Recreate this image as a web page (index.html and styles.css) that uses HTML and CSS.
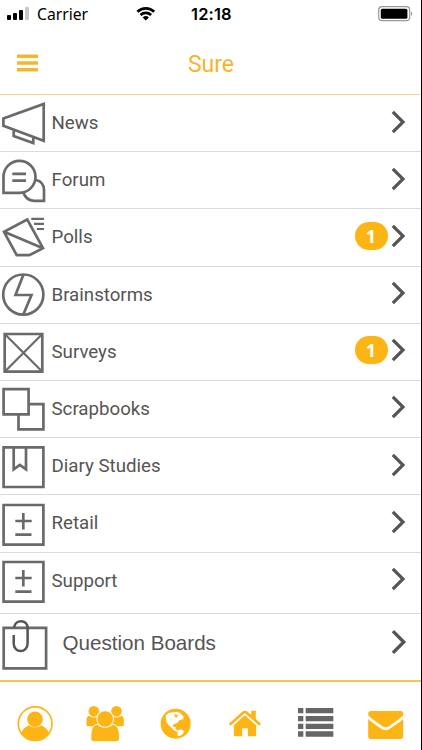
FILE: index.html
```html
<!DOCTYPE html>
<html lang="en">
<head>
<meta charset="utf-8">
<meta name="viewport" content="width=device-width, initial-scale=1">
<title>Sure</title>
<link rel="stylesheet" href="styles.css">
</head>
<body>
<svg class="defs" aria-hidden="true">
  <symbol id="chevron" viewBox="0 0 16 24"><path d="M1.8 1.8 12 12 1.8 22.2" fill="none" stroke="#555" stroke-width="3.2"/></symbol>
  <symbol id="plusminus" viewBox="0 0 50 56"><path d="M3.6 9h39.8v39.7H3.6zM23.3 17v16.5M15.3 25h16.4M15.3 38.7h16.2"/></symbol>
</svg>
<div class="app">
  <header class="status">
    <svg class="signal" viewBox="0 0 24 16"><rect x="0" y="9" width="4" height="5" rx="1"/><rect x="6" y="7" width="4" height="7" rx="1"/><rect x="12" y="4" width="4" height="10" rx="1"/><rect x="18" y="1" width="4" height="13" rx="1" fill="#c8c8c8"/></svg>
    <span class="carrier">Carrier</span>
    <svg class="wifi" viewBox="0 0 20 16"><path d="M1.400 5.800a12 12 0 0 1 16.800 0M4.500 9a7.700 7.700 0 0 1 10.600 0" fill="none" stroke="#000" stroke-width="2.700"/><path d="M9.800 14.600 6.700 11.400a4.500 4.500 0 0 1 6.200 0z"/></svg>
    <span class="time">12:18</span>
    <svg class="battery" viewBox="0 0 36 16"><rect x=".7" y=".7" width="31" height="14" rx="3.5" fill="#fff" stroke="#999" stroke-width="1.200"/><rect x="2.800" y="2.800" width="26.600" height="10" rx="1.500"/><path d="M33.200 5.500q2 2.200 0 4.500z" fill="#777"/></svg>
  </header>
  <nav class="titlebar">
    <svg class="burger" viewBox="0 0 21 18"><path d="M0 2.200h21M0 9h21M0 15.800h21" stroke="#f3b72d" stroke-width="3.600"/></svg>
    <h1>Sure</h1>
  </nav>
  <main class="list">
    <a class="row"><svg class="icon" viewBox="0 0 50 56"><path d="M43.700 9v36.700L3.400 30.800v-7.300zM13.700 35v6l19.600 7v-6"/></svg><span class="label">News</span><svg class="chev"><use href="#chevron"/></svg></a>
    <a class="row"><svg class="icon" viewBox="0 0 50 56"><path d="M3.500 40.800V25a16 16 0 1 1 16 15.800zM12.300 21.800H26M12.300 28.600H26M35.800 28q8 1.500 8.200 10v10.800H34q-8-.5-10.500-8"/></svg><span class="label">Forum</span><svg class="chev"><use href="#chevron"/></svg></a>
    <a class="row"><svg class="icon" viewBox="0 0 50 56"><path d="M27.300 10.500 4 22.800l12.700 23.400h12.600L43 39.200zM4 22.800l39 16.400"/><path class="thin" d="M31.300 9.800H44M34 14.800h10M36.800 20H44"/></svg><span class="label">Polls</span><span class="badge">1</span><svg class="chev"><use href="#chevron"/></svg></a>
    <a class="row"><svg class="icon" viewBox="0 0 50 56"><circle cx="23.300" cy="27.600" r="20.100"/><path d="M23.300 8 15.500 28h16l-8.200 19.500"/></svg><span class="label">Brainstorms</span><svg class="chev"><use href="#chevron"/></svg></a>
    <a class="row"><svg class="icon" viewBox="0 0 50 56"><path d="M4.700 10h37.600v37.700H4.700z"/><path class="thin" d="m4.700 10 37.600 37.700M42.300 10 4.700 47.700"/></svg><span class="label">Surveys</span><span class="badge">1</span><svg class="chev"><use href="#chevron"/></svg></a>
    <a class="row"><svg class="icon" viewBox="0 0 50 56"><path d="M3.600 8.200h25v25.100h-25zM28.600 23.100h14.800v25.200H18.500v-15"/></svg><span class="label">Scrapbooks</span><svg class="chev"><use href="#chevron"/></svg></a>
    <a class="row"><svg class="icon" viewBox="0 0 50 56"><path d="M3.600 9.300h39.800V49H3.600zM13.700 9.300v22l6.100-4.300 6.200 4.300v-22"/></svg><span class="label">Diary Studies</span><svg class="chev"><use href="#chevron"/></svg></a>
    <a class="row"><svg class="icon lower"><use href="#plusminus"/></svg><span class="label">Retail</span><svg class="chev"><use href="#chevron"/></svg></a>
    <a class="row tall"><svg class="icon"><use href="#plusminus"/></svg><span class="label">Support</span><svg class="chev"><use href="#chevron"/></svg></a>
    <a class="row last"><svg class="icon" viewBox="0 0 50 56"><path d="M3.700 13.800h42.400v40.500H3.700z"/><path class="clip" d="M13.700 21v8.500c0 10 13.900 10 13.900 0V14c0-9-12.500-9-13.500-.5"/></svg><span class="label">Question Boards</span><svg class="chev"><use href="#chevron"/></svg></a>
  </main>
  <footer class="tabs">
    <svg viewBox="0 24 210.500 201"><circle cx="105.500" cy="146" r="50.500" fill="none" stroke="#fdb515" stroke-width="5"/><circle cx="105" cy="133" r="23.500"/><path d="M63 174c5-11 14-19 24-23 10 9 26 9 36 0 11 4 19 12 24 23a50 50 0 0 1-84 0z"/></svg>
    <svg viewBox="210.500 24 210.500 201"><circle cx="282" cy="109" r="16"/><circle cx="350" cy="109" r="16"/><path d="M260 149v-14c0-8 3-12 8-13 9 7 19 7 28 0l8 6v26h-38c-4 0-6-2-6-5zM372 149v-14c0-8-3-12-8-13-9 7-19 7-28 0l-8 6v26h38c4 0 6-2 6-5z"/><path stroke="#fff" stroke-width="3" d="M273 190c0-22 2-40 20-42 13 11 33 11 46 0 17 2 20 20 20 42 0 7-4 10-10 10h-66c-6 0-10-3-10-10z"/><circle cx="316" cy="132" r="25" stroke="#fff" stroke-width="3"/></svg>
    <svg viewBox="421 24 210.500 201"><circle cx="528" cy="146" r="45"/><path fill="#fff" d="m498 122 8-8 14-2 12-2 10 4 10 11-2 8-10 2-7 8-8 4-6 3 1 5 7 1 1 6 6 4 2 5-8-2-8-5-6-8-8-6-5-8-2-9zM533 176l3-10 8-3 9 5-3 8-8 6-7 2z"/><path d="m526 117 9 4-4 7-7-4z"/></svg>
    <svg viewBox="-1.500 24 210.500 201"><path d="m55 146 40-36q8-6 16 0l11 9v-12h14v25l15 14-5 6-43-38-43 38z"/><path d="m103 121 34 30v28q0 5-5 5h-20v-24H95v24H75q-5 0-5-5v-28z"/></svg>
    <svg class="active" viewBox="209 24 210.500 201"><path d="M260 99h16v16h-16zM283 99h83v16h-83zM260 123h16v16h-16zM283 123h83v16h-83zM260 146h16v16h-16zM283 146h83v16h-83zM260 169h16v16h-16zM283 169h83v16h-83z"/></svg>
    <svg viewBox="419.500 24 210.500 201"><path d="M471 120v-4q0-8 8-8h89q8 0 8 8v4c-3 6-30 25-40 32q-12 9-24 0c-12-8-37-25-41-32z"/><path d="M471 132c8 8 25 19 37 28q15 11 30 0c12-9 31-20 38-28v52q0 8-8 8h-89q-8 0-8-8z"/></svg>
  </footer>
</div>
</body>
</html>
```
FILE: styles.css
```css
* { box-sizing: border-box; }
body { margin: 0; background: #fff; font-family: Roboto, "Liberation Sans", sans-serif; }
.defs { display: block; width: 0; height: 0; }
.app { width: 422px; height: 750px; overflow: hidden; border-right: 1px solid #000; display: flex; flex-direction: column; }
.status { height: 28px; flex: none; display: flex; align-items: center; padding-left: 7px; color: #000; }
.signal { width: 24px; height: 16px; margin-top: -1px; }
.carrier { width: 99px; margin-left: 6px; font: 15.700px/20px "Noto Sans", sans-serif; }
.wifi { width: 20px; height: 16px; margin-top: -1px; }
.time { width: 60px; margin-left: 35px; font: 600 16.500px/20px Inter, sans-serif; letter-spacing: 0.150px; }
.battery { width: 36px; height: 16px; margin-left: 127px; }
.titlebar { height: 67px; flex: none; display: grid; grid-template-columns: 1fr auto 1fr; align-items: center; padding-left: 18px; padding-right: 17px; border-bottom: 1px solid #f8d78b; }
.burger { width: 21px; height: 18px; margin: 3px 0 0 -1px; }
.titlebar h1 { margin: 8px 0 0; font-size: 23px; line-height: 28px; font-weight: 400; color: #f6b42b; }
.list { flex: none; display: flex; flex-direction: column; }
.row { height: 57.200px; flex: none; display: flex; align-items: flex-start; border-bottom: 1px solid #dadada; color: #555; }
.icon { width: 50px; height: 56px; flex: none; fill: none; stroke: #6a6a6a; stroke-width: 2.700; }
.lower { margin-top: 0.600px; }
.thin { stroke-width: 2.200; }
.clip { stroke: #555; stroke-width: 2.500; }
.label { flex: 1; margin: 16px 0 0 1.500px; font-size: 18.700px; line-height: 24px; white-space: nowrap; }
.badge { width: 33px; height: 28px; margin: 12.600px 3px 0 0; border-radius: 14px; background: #fdb515; color: #fff; font: 700 18px/28px "Open Sans", sans-serif; text-align: center; }
.chev { width: 16px; height: 24px; margin: 14.500px 14.500px 0 0; flex: none; }
.tall { height: 61px; }
.last { height: 68.400px; border-bottom: 2px solid #f7c64f; }
.last .label { margin: 17.500px 0 0 12.500px; font: 20.600px/24px "Liberation Sans", sans-serif; }
.last .chev { width: 17px; height: 26px; margin: 15.500px 13.500px 0 0; }
.tabs { flex: none; height: 67px; margin-top: 1px; display: grid; grid-template-columns: repeat(6, 1fr); fill: #fdb515; }
.tabs svg { width: 100%; height: 67px; }
.tabs .active { fill: #666; }
```
